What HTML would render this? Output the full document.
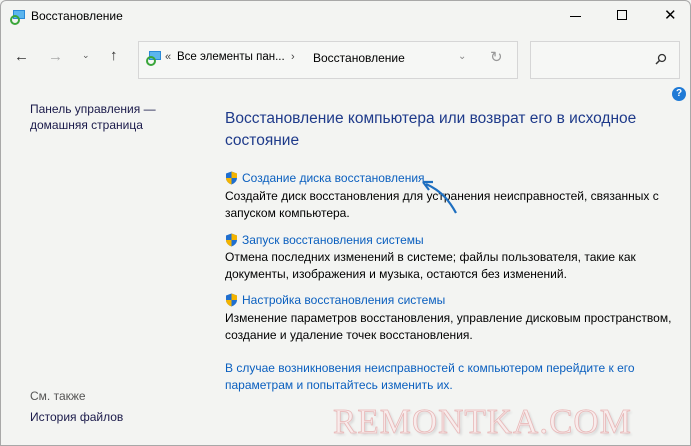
<!DOCTYPE html>
<html><head><meta charset="utf-8"><style>
*{margin:0;padding:0;box-sizing:border-box}
body{width:691px;height:446px;overflow:hidden;background:#f3f4f2;font-family:"Liberation Sans","DejaVu Sans",sans-serif;font-size:12px;color:#000;position:relative}
.a{position:absolute;white-space:nowrap}
.link{color:#0a5fbf}
.h{color:#1e3a8a;font-size:15.5px}
.frame{position:absolute;left:0;top:0;width:691px;height:446px;border:1px solid #a8a8a8;border-radius:6px 6px 0 0;pointer-events:none}
.box{position:absolute;border:1px solid #d6d6d6;background:#f6f7f5}
.sh{position:absolute;width:13px;height:14px}
</style></head><body>
<div class="frame"></div>
<svg class="a" style="left:10px;top:9px" width="16" height="16" viewBox="0 0 16 16"><rect x="3" y="1" width="12" height="9" fill="#2a8ad8"/><rect x="4" y="2" width="10" height="7" fill="#5bb5ee"/><circle cx="5" cy="11" r="4" fill="none" stroke="#3aa63a" stroke-width="2"/></svg>
<div class="a" style="left:31px;top:9px;font-size:12px">Восстановление</div>
<div class="a" style="left:570px;top:16px;width:11px;height:1px;background:#000"></div>
<div class="a" style="left:617px;top:10px;width:10px;height:10px;border:1px solid #000"></div>
<div class="a" style="left:664px;top:6px;font-size:15px">✕</div>
<div class="a" style="left:14px;top:48px;font-size:15px;color:#333">←</div>
<div class="a" style="left:48px;top:48px;font-size:15px;color:#aaa">→</div>
<div class="a" style="left:82px;top:50px;font-size:9px;color:#555">⌄</div>
<div class="a" style="left:110px;top:47px;font-size:15px;color:#333">↑</div>
<div class="box" style="left:138px;top:41px;width:380px;height:38px"></div>
<svg class="a" style="left:146px;top:50px" width="16" height="16" viewBox="0 0 16 16"><rect x="3" y="1" width="12" height="9" fill="#2a8ad8"/><rect x="4" y="2" width="10" height="7" fill="#5bb5ee"/><circle cx="5" cy="11" r="4" fill="none" stroke="#3aa63a" stroke-width="2"/></svg>
<div class="a" style="left:165px;top:51px;font-size:11px;color:#444">«</div>
<div class="a" style="left:177px;top:51px;font-size:11.5px">Все элементы пан...</div>
<div class="a" style="left:291px;top:51px;font-size:11px;color:#444">›</div>
<div class="a" style="left:313px;top:51px">Восстановление</div>
<div class="a" style="left:458px;top:51px;font-size:10px;color:#888">⌄</div>
<div class="a" style="left:490px;top:48px;font-size:15px;color:#999">↻</div>
<div class="box" style="left:530px;top:41px;width:150px;height:38px"></div>
<svg class="a" style="left:655px;top:53px" width="12" height="12" viewBox="0 0 12 12"><circle cx="7" cy="5" r="3.5" fill="none" stroke="#333" stroke-width="1.3"/><path d="M4.5 7.5L1 11" stroke="#333" stroke-width="1.5"/></svg>
<div class="a" style="left:672px;top:87px;width:14px;height:14px;border-radius:50%;background:#1f7ad6;color:#fff;font-size:10px;font-weight:bold;text-align:center;line-height:14px">?</div>
<div class="a" style="left:30px;top:101px;color:#1a1a4a;line-height:16px">Панель управления —<br>домашняя страница</div>
<div class="a" style="left:30px;top:389px;color:#555">См. также</div>
<div class="a" style="left:30px;top:410px;color:#1a1a4a">История файлов</div>
<div class="a h" style="left:225px;top:108px;line-height:22px">Восстановление компьютера или возврат его в исходное<br>состояние</div>
<svg class="sh" style="left:225px;top:171px" viewBox="0 0 13 14"><path d="M6.5 0.5L12 2.5V7C12 10 9.5 12.5 6.5 13.5C3.5 12.5 1 10 1 7V2.5Z" fill="#1f6fcf"/><path d="M6.5 0.5L12 2.5V7H6.5ZM6.5 7H1C1 10 3.5 12.5 6.5 13.5Z" fill="#f4b400"/></svg>
<div class="a link" style="left:242px;top:171px">Создание диска восстановления</div>
<div class="a" style="left:225px;top:188px;line-height:17px">Создайте диск восстановления для устранения неисправностей, связанных с<br>запуском компьютера.</div>
<svg class="sh" style="left:225px;top:233px" viewBox="0 0 13 14"><path d="M6.5 0.5L12 2.5V7C12 10 9.5 12.5 6.5 13.5C3.5 12.5 1 10 1 7V2.5Z" fill="#1f6fcf"/><path d="M6.5 0.5L12 2.5V7H6.5ZM6.5 7H1C1 10 3.5 12.5 6.5 13.5Z" fill="#f4b400"/></svg>
<div class="a link" style="left:242px;top:233px">Запуск восстановления системы</div>
<div class="a" style="left:225px;top:249px;line-height:17px">Отмена последних изменений в системе; файлы пользователя, такие как<br>документы, изображения и музыка, остаются без изменений.</div>
<svg class="sh" style="left:225px;top:293px" viewBox="0 0 13 14"><path d="M6.5 0.5L12 2.5V7C12 10 9.5 12.5 6.5 13.5C3.5 12.5 1 10 1 7V2.5Z" fill="#1f6fcf"/><path d="M6.5 0.5L12 2.5V7H6.5ZM6.5 7H1C1 10 3.5 12.5 6.5 13.5Z" fill="#f4b400"/></svg>
<div class="a link" style="left:242px;top:293px">Настройка восстановления системы</div>
<div class="a" style="left:225px;top:310px;line-height:17px">Изменение параметров восстановления, управление дисковым пространством,<br>создание и удаление точек восстановления.</div>
<div class="a link" style="left:225px;top:360px;line-height:17px">В случае возникновения неисправностей с компьютером перейдите к его<br>параметрам и попытайтесь изменить их.</div>
<svg class="a" style="left:420px;top:176px" width="40" height="40" viewBox="0 0 40 40"><path d="M36 37C30 26 22 15 6 8" fill="none" stroke="#1e6fc0" stroke-width="2.2"/><path d="M3 6L13 6M3 6L9 14" fill="none" stroke="#1e6fc0" stroke-width="2.2"/></svg>
<div class="a" style="left:333px;top:402px;font-family:'Liberation Serif',serif;font-size:35px;color:#f8ecec;letter-spacing:1px;-webkit-text-stroke:0.8px #e8b8b8;text-shadow:2px 2px 2px #d8d8d8">REMONTKA.COM</div>
</body></html>
